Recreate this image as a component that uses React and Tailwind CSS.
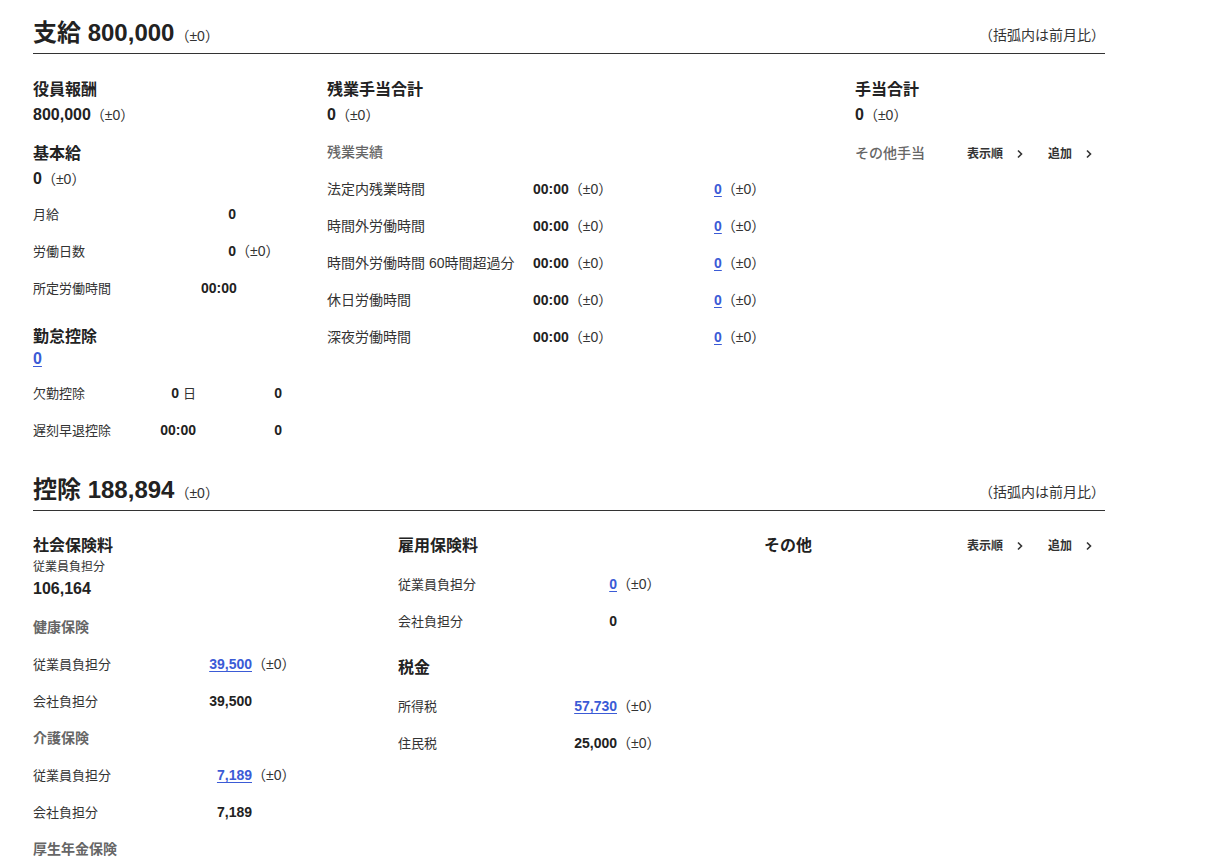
import React from "react";

const Diff = () => (
  <span className="text-[14px] font-normal text-[#333]">（±0）</span>
);

const Link = ({ children }) => (
  <span className="font-bold text-[#3b5bd6] underline underline-offset-2">{children}</span>
);

const Chevron = () => (
  <svg width="8" height="10" viewBox="0 0 8 10" className="ml-[13px]">
    <path d="M2 1.5 L5.5 5 L2 8.5" fill="none" stroke="#333" strokeWidth="1.6" />
  </svg>
);

const SectionHeader = ({ title, amount }) => (
  <div className="flex h-[36px] items-center justify-between border-b border-[#333] pb-[2px]">
    <div className="flex items-baseline leading-[32px]">
      <span className="text-[24px] font-bold text-[#222]">{title} {amount}</span>
      <span className="ml-px text-[14px] text-[#333]">（±0）</span>
    </div>
    <span className="text-[14px] text-[#333] leading-[20px]">（括弧内は前月比）</span>
  </div>
);

const Heading = ({ children, className = "" }) => (
  <div className={`h-[22px] text-[16px] font-bold leading-[22px] text-[#222] ${className}`}>{children}</div>
);

const BigValue = ({ children, diff = true }) => (
  <div className="mt-[2px] flex h-[24px] items-center text-[16px] font-bold leading-[24px] text-[#222]">
    <span>{children}</span>
    {diff && <Diff />}
  </div>
);

const SubHead = ({ children, className = "", weight = "font-bold" }) => (
  <div className={`flex h-[37px] items-center text-[14px] ${weight} text-[#666] ${className}`}>{children}</div>
);

const Actions = () => (
  <div className="flex items-center text-[12px] font-bold text-[#333]">
    <span>表示順</span>
    <Chevron />
    <span className="ml-[24px]">追加</span>
    <Chevron />
  </div>
);

const Row = ({ label, labelW, labelSize = "text-[13px]", value, valueW, diff, className = "" }) => (
  <div className={`flex h-[37px] items-center ${className}`}>
    <span className={`${labelSize} text-[#333]`} style={{ width: labelW }}>{label}</span>
    <span className="text-right text-[14px] font-bold text-[#222]" style={{ width: valueW }}>{value}</span>
    {diff && <Diff />}
  </div>
);

export default function App() {
  return (
    <div className="h-[861px] overflow-hidden bg-white font-['Liberation_Sans','Noto_Sans_CJK_JP',sans-serif] text-[#333]">
      <div className="ml-[33px] w-[1072px] pt-[18px]">
        {/* 支給 */}
        <SectionHeader title="支給" amount="800,000" />
        <div className="flex">
          {/* col1 */}
          <div className="w-[294px] pt-[25px]">
            <Heading>役員報酬</Heading>
            <BigValue>800,000</BigValue>
            <Heading className="mt-[16px]">基本給</Heading>
            <BigValue>0</BigValue>
            <div className="mt-[5px]">
              <Row label="月給" labelW={168} valueW={35} value="0" />
              <Row label="労働日数" labelW={168} valueW={35} value="0" diff />
              <Row label="所定労働時間" labelW={168} valueW={35} value="00:00" />
            </div>
            <Heading className="mt-[19px]">勤怠控除</Heading>
            <div className="h-[22px] text-[16px] leading-[22px]"><Link>0</Link></div>
            <div className="mt-[5px]">
              <div className="flex h-[37px] items-center">
                <span className="w-[110px] text-[13px] text-[#333]">欠勤控除</span>
                <span className="w-[53px] text-right text-[14px] font-bold text-[#222]">0 <span className="text-[13px] font-normal text-[#333]">日</span></span>
                <span className="w-[86px] text-right text-[14px] font-bold text-[#222]">0</span>
              </div>
              <div className="flex h-[37px] items-center">
                <span className="w-[110px] text-[13px] text-[#333]">遅刻早退控除</span>
                <span className="w-[53px] text-right text-[14px] font-bold text-[#222]">00:00</span>
                <span className="w-[86px] text-right text-[14px] font-bold text-[#222]">0</span>
              </div>
            </div>
          </div>
          {/* col2 */}
          <div className="w-[528px] pt-[25px]">
            <Heading>残業手当合計</Heading>
            <BigValue>0</BigValue>
            <SubHead className="mt-[7px]" weight="font-medium">残業実績</SubHead>
            {["法定内残業時間", "時間外労働時間", "時間外労働時間 60時間超過分", "休日労働時間", "深夜労働時間"].map((l) => (
              <div key={l} className="flex h-[37px] items-center">
                <span className="w-[206px] text-[14px] text-[#333]">{l}</span>
                <span className="w-[181px] text-[14px] font-bold text-[#222]">00:00<Diff /></span>
                <span className="text-[14px]"><Link>0</Link><Diff /></span>
              </div>
            ))}
          </div>
          {/* col3 */}
          <div className="w-[250px] pt-[25px]">
            <Heading>手当合計</Heading>
            <BigValue>0</BigValue>
            <div className="mt-[8px] flex h-[37px] items-center">
              <span className="w-[112px] text-[14px] font-medium text-[#666]">その他手当</span>
              <Actions />
            </div>
          </div>
        </div>

        {/* 控除 */}
        <div className="mt-[26px]">
          <SectionHeader title="控除" amount="188,894" />
        </div>
        <div className="flex">
          {/* col1 */}
          <div className="w-[365px] pt-[24px]">
            <Heading>社会保険料</Heading>
            <div className="flex h-[20px] items-center text-[12px] text-[#333]">従業員負担分</div>
            <div className="flex h-[24px] items-center text-[16px] font-bold text-[#222]">106,164</div>
            <SubHead className="mt-[8px]">健康保険</SubHead>
            <Row label="従業員負担分" labelW={169} valueW={50} value={<Link>39,500</Link>} diff />
            <Row label="会社負担分" labelW={169} valueW={50} value="39,500" />
            <SubHead>介護保険</SubHead>
            <Row label="従業員負担分" labelW={169} valueW={50} value={<Link>7,189</Link>} diff />
            <Row label="会社負担分" labelW={169} valueW={50} value="7,189" />
            <SubHead>厚生年金保険</SubHead>
          </div>
          {/* col2 */}
          <div className="w-[366px] pt-[24px]">
            <Heading>雇用保険料</Heading>
            <div className="mt-[9px]">
              <Row label="従業員負担分" labelW={169} valueW={50} value={<Link>0</Link>} diff />
              <Row label="会社負担分" labelW={169} valueW={50} value="0" />
            </div>
            <Heading className="mt-[17px]">税金</Heading>
            <div className="mt-[9px]">
              <Row label="所得税" labelW={169} valueW={50} value={<Link>57,730</Link>} diff />
              <Row label="住民税" labelW={169} valueW={50} value="25,000" diff />
            </div>
          </div>
          {/* col3 */}
          <div className="w-[341px] pt-[24px]">
            <div className="flex h-[22px] items-center">
              <span className="w-[203px] text-[16px] font-bold text-[#222]">その他</span>
              <Actions />
            </div>
          </div>
        </div>
      </div>
    </div>
  );
}
